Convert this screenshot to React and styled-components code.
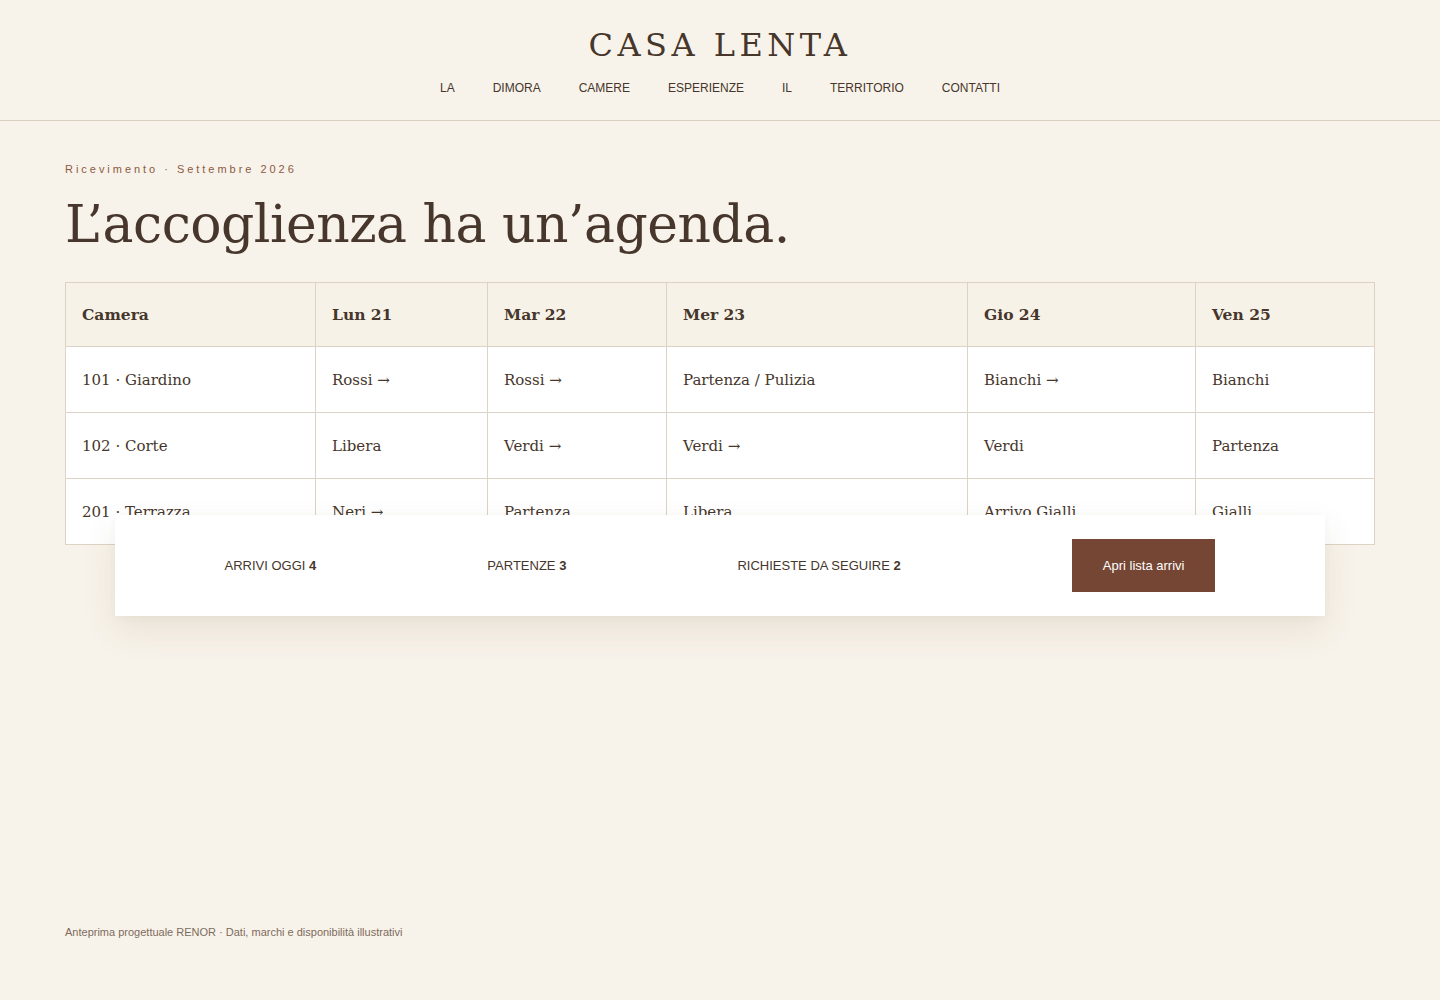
import React from "react";
import styled, { createGlobalStyle } from "styled-components";

const serif = `"DejaVu Serif", "Liberation Serif", Georgia, serif`;
const sans = `"Liberation Sans", Arial, Helvetica, sans-serif`;

const Global = createGlobalStyle`
  html, body { margin: 0; padding: 0; }
  body {
    background: #f8f3ea;
    color: #4a3629;
    font-family: ${sans};
  }
  * { box-sizing: border-box; }
`;

const Page = styled.div`
  min-height: 1000px;
  display: flex;
  flex-direction: column;
`;

const Header = styled.header`
  display: flex;
  flex-direction: column;
  align-items: center;
  padding-top: 26px;
  height: 121px;
  border-bottom: 1px solid #d9d0c2;
`;

const Brand = styled.div`
  font-family: ${serif};
  font-size: 32px;
  letter-spacing: 0.14em;
  line-height: 38px;
  color: #46362b;
`;

const Nav = styled.nav`
  display: flex;
  gap: 38px;
  margin-top: 17px;
`;

const NavLink = styled.a`
  font-size: 12px;
  line-height: 14px;
  color: #46362b;
  text-transform: uppercase;
  text-decoration: none;
`;

const Main = styled.main`
  padding: 41px 65px 0;
  display: flex;
  flex-direction: column;
`;

const Eyebrow = styled.div`
  font-size: 11px;
  letter-spacing: 0.27em;
  color: #8b5a43;
  line-height: 14px;
`;

const Title = styled.h1`
  font-family: ${serif};
  font-weight: 400;
  font-size: 52px;
  line-height: 72px;
  margin: 12px 0 22px;
  color: #46362b;
  letter-spacing: -0.01em;
`;

const Table = styled.table`
  width: 1309px;
  border-collapse: collapse;
  table-layout: fixed;
  font-family: ${serif};
  border: 1px solid #ddd3c4;
`;

const Col = styled.col`
  width: ${(p) => p.$w}px;
`;

const Th = styled.th`
  text-align: left;
  font-weight: 700;
  font-size: 15.5px;
  height: 64px;
  padding: 0 16px;
  background: #f7f2e8;
  border: 1px solid #ddd3c4;
  color: #46362b;
`;

const Td = styled.td`
  font-size: 15px;
  height: 66px;
  padding: 0 16px;
  background: #ffffff;
  border: 1px solid #ddd3c4;
  color: #46362b;
  white-space: nowrap;
`;

const Summary = styled.div`
  position: relative;
  z-index: 2;
  margin: -30px 50px 0;
  width: 1210px;
  height: 101px;
  background: #ffffff;
  padding: 0 24px;
  display: flex;
  align-items: center;
  justify-content: space-around;
  box-shadow: 0 14px 34px rgba(90, 70, 40, 0.1), 0 2px 8px rgba(90, 70, 40, 0.04);
`;

const Stat = styled.div`
  font-size: 13px;
  text-transform: uppercase;
  color: #46362b;

  b {
    font-weight: 700;
  }
`;

const Button = styled.button`
  font-family: ${sans};
  font-size: 13px;
  color: #ffffff;
  background: #764634;
  border: none;
  height: 53px;
  padding: 0 31px;
  cursor: pointer;
`;

const Footer = styled.footer`
  margin-top: auto;
  padding: 0 65px 62px;
  font-size: 11px;
  color: #7d6b5d;
`;

const cols = [250, 172, 179, 301, 228, 179];
const heads = ["Camera", "Lun 21", "Mar 22", "Mer 23", "Gio 24", "Ven 25"];
const rows = [
  ["101 · Giardino", "Rossi →", "Rossi →", "Partenza / Pulizia", "Bianchi →", "Bianchi"],
  ["102 · Corte", "Libera", "Verdi →", "Verdi →", "Verdi", "Partenza"],
  ["201 · Terrazza", "Neri →", "Partenza", "Libera", "Arrivo Gialli", "Gialli"],
];

export default function App() {
  return (
    <Page>
      <Global />
      <Header>
        <Brand>CASA LENTA</Brand>
        <Nav>
          {["La", "Dimora", "Camere", "Esperienze", "Il", "Territorio", "Contatti"].map((n) => (
            <NavLink key={n} href="#">{n}</NavLink>
          ))}
        </Nav>
      </Header>
      <Main>
        <Eyebrow>Ricevimento · Settembre 2026</Eyebrow>
        <Title>L’accoglienza ha un’agenda.</Title>
        <Table>
          <colgroup>
            {cols.map((w, i) => <Col key={i} $w={w} />)}
          </colgroup>
          <thead>
            <tr>{heads.map((h) => <Th key={h}>{h}</Th>)}</tr>
          </thead>
          <tbody>
            {rows.map((r) => (
              <tr key={r[0]}>{r.map((c, i) => <Td key={i}>{c}</Td>)}</tr>
            ))}
          </tbody>
        </Table>
        <Summary>
          <Stat>Arrivi oggi <b>4</b></Stat>
          <Stat>Partenze <b>3</b></Stat>
          <Stat>Richieste da seguire <b>2</b></Stat>
          <Button>Apri lista arrivi</Button>
        </Summary>
      </Main>
      <Footer>Anteprima progettuale RENOR · Dati, marchi e disponibilità illustrativi</Footer>
    </Page>
  );
}
